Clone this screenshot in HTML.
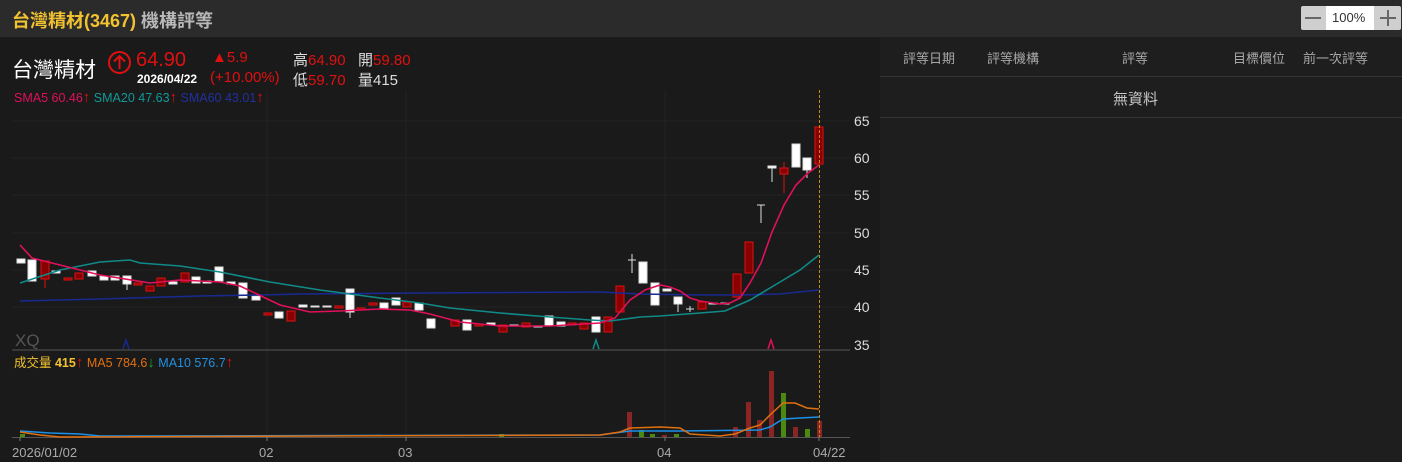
<!DOCTYPE html>
<html><head><meta charset="utf-8"><style>
body{margin:0;width:1402px;height:462px;background:#1a1a1a;overflow:hidden;font-family:"Liberation Sans","Noto Sans CJK TC",sans-serif;position:relative}
.t{position:absolute;white-space:nowrap}
.a{font-size:15px;line-height:10px}
</style></head><body>
<div style="position:absolute;left:0;top:0;width:1402px;height:37px;background:#2b2b2b"></div>
<div class="t" style="left:12px;top:7px;font-size:18px;font-weight:bold;color:#f2c230">台灣精材(3467) <span style="color:#b8b8b8">機構評等</span></div>
<div style="position:absolute;left:1301px;top:6px;width:100px;height:24px;background:#cfcfcf;border-radius:2px"></div>
<div style="position:absolute;left:1326px;top:6px;width:48px;height:24px;background:#fff"></div>
<div class="t" style="left:1332px;top:10px;font-size:13px;color:#333">100%</div>
<div style="position:absolute;left:1305px;top:17px;width:16px;height:2px;background:#666"></div>
<div style="position:absolute;left:1380px;top:17px;width:16px;height:2px;background:#666"></div>
<div style="position:absolute;left:1387px;top:10px;width:2px;height:16px;background:#666"></div>
<div style="position:absolute;left:880px;top:37px;width:522px;height:425px;background:#1e1e1e"></div>
<div style="position:absolute;left:880px;top:76px;width:522px;height:1px;background:#353535"></div>
<div style="position:absolute;left:880px;top:117px;width:522px;height:1px;background:#353535"></div>
<div class="t" style="top:48px;left:903px;font-size:13px;color:#a8a8a8">評等日期</div>
<div class="t" style="top:48px;left:987px;font-size:13px;color:#a8a8a8">評等機構</div>
<div class="t" style="top:48px;left:1122px;font-size:13px;color:#a8a8a8">評等</div>
<div class="t" style="top:48px;left:1233px;font-size:13px;color:#a8a8a8">目標價位</div>
<div class="t" style="top:48px;left:1303px;font-size:13px;color:#a8a8a8">前一次評等</div>
<div class="t" style="top:88px;left:1113px;font-size:15px;color:#c8c8c8">無資料</div>

<div class="t" style="left:12px;top:54px;font-size:21px;color:#fff">台灣精材</div>
<svg style="position:absolute;left:107px;top:50px" width="25" height="25"><circle cx="12.5" cy="12.5" r="10.5" fill="none" stroke="#e01010" stroke-width="2"/><path d="M12.5 19V6M7 11.5l5.5-5.5 5.5 5.5" fill="none" stroke="#e01010" stroke-width="2"/></svg>
<div class="t" style="left:136px;top:49px;font-size:20px;color:#e01010">64.90</div>
<div class="t" style="left:137px;top:72px;font-size:12px;font-weight:bold;color:#fff">2026/04/22</div>
<div class="t" style="left:212px;top:49px;font-size:15px;color:#e01010">▲5.9</div>
<div class="t" style="left:210px;top:69px;font-size:15px;color:#e01010">(+10.00%)</div>
<div class="t" style="left:293px;top:49px;font-size:15px;color:#ddd">高<span style="color:#e01010">64.90</span></div>
<div class="t" style="left:293px;top:69px;font-size:15px;color:#ddd">低<span style="color:#e01010">59.70</span></div>
<div class="t" style="left:358px;top:49px;font-size:15px;color:#ddd">開<span style="color:#e01010">59.80</span></div>
<div class="t" style="left:358px;top:69px;font-size:15px;color:#ddd">量415</div>
<div class="t" style="left:14px;top:91px;font-size:12.5px"><span style="color:#e0105a">SMA5 60.46</span><span class="a" style="color:#e01010">↑</span> <span style="color:#109a98">SMA20 47.63</span><span class="a" style="color:#e01010">↑</span> <span style="color:#2030a0">SMA60 43.01</span><span class="a" style="color:#e01010">↑</span></div>
<div class="t" style="left:14px;top:352px;font-size:12.5px"><span style="color:#f2c230">成交量 <b>415</b></span><span class="a" style="color:#e01010">↑</span> <span style="color:#e07010">MA5 784.6</span><span class="a" style="color:#20a020">↓</span> <span style="color:#2090e0">MA10 576.7</span><span class="a" style="color:#e01010">↑</span></div>
<div class="t" style="left:15px;top:331px;font-size:17px;color:#555">XQ</div>

<svg style="position:absolute;left:0;top:0" width="880" height="462">
<g stroke="#232323" stroke-width="1">
<line x1="12" x2="850" y1="121" y2="121"/><line x1="12" x2="850" y1="158" y2="158"/><line x1="12" x2="850" y1="195" y2="195"/><line x1="12" x2="850" y1="233" y2="233"/><line x1="12" x2="850" y1="270" y2="270"/><line x1="12" x2="850" y1="307" y2="307"/>
<line x1="267" x2="267" y1="90" y2="437"/><line x1="406" x2="406" y1="90" y2="437"/><line x1="665" x2="665" y1="90" y2="437"/>
</g>
<line x1="12" x2="850" y1="350" y2="350" stroke="#555"/>
<line x1="12" x2="850" y1="437.5" y2="437.5" stroke="#555"/>
<g stroke="#777"><line x1="20" x2="20" y1="437" y2="441"/><line x1="267" x2="267" y1="437" y2="441"/><line x1="406" x2="406" y1="437" y2="441"/><line x1="665" x2="665" y1="437" y2="441"/><line x1="819" x2="819" y1="437" y2="441"/></g>
<g font-size="14" fill="#ddd" font-family="Liberation Sans">
<text x="854" y="126">65</text><text x="854" y="163">60</text><text x="854" y="200">55</text><text x="854" y="238">50</text><text x="854" y="275">45</text><text x="854" y="312">40</text><text x="854" y="350">35</text>
</g>
<g font-size="13" fill="#aaa" font-family="Liberation Sans">
<text x="12" y="457">2026/01/02</text><text x="259" y="457">02</text><text x="398" y="457">03</text><text x="657" y="457">04</text><text x="813" y="457">04/22</text>
</g>
<g fill="#fff" stroke="#ddd" stroke-width="1">
<rect x="17" y="259" width="8" height="4"/><rect x="28" y="260" width="8" height="21"/><rect x="52" y="271" width="8" height="2"/>
<rect x="88" y="271" width="8" height="5"/><rect x="100" y="276" width="8" height="4"/><rect x="111" y="276" width="8" height="4"/><rect x="123" y="276" width="8" height="8"/><line x1="127" x2="127" y1="284" y2="290"/>
<rect x="169" y="282" width="8" height="2"/><rect x="192" y="277" width="8" height="6"/><rect x="203" y="281" width="8" height="2"/><rect x="215" y="267" width="8" height="14"/><rect x="227" y="282" width="8" height="2"/>
<rect x="239" y="283" width="8" height="15"/><rect x="252" y="296" width="8" height="4"/><rect x="275" y="312" width="8" height="6"/><rect x="299" y="305" width="8" height="2"/><rect x="311" y="306" width="8" height="1"/><rect x="323" y="306" width="8" height="1"/>
<rect x="346" y="289" width="8" height="23"/><line x1="350" x2="350" y1="312" y2="318"/><rect x="380" y="303" width="8" height="5"/><rect x="392" y="298" width="8" height="7"/><rect x="415" y="303" width="8" height="7"/><rect x="427" y="319" width="8" height="9"/>
<rect x="463" y="320" width="8" height="10"/><rect x="487" y="323" width="8" height="2"/><rect x="510" y="325" width="8" height="1"/><rect x="534" y="326" width="8" height="1"/><rect x="545" y="316" width="8" height="10"/><rect x="557" y="322" width="8" height="4"/>
<rect x="592" y="317" width="8" height="15"/><line x1="632" x2="632" y1="254" y2="273"/><line x1="628" x2="636" y1="260" y2="260"/>
<rect x="639" y="262" width="8" height="21"/><rect x="651" y="283" width="8" height="22"/><rect x="663" y="289" width="8" height="2"/><rect x="674" y="297" width="8" height="7"/><line x1="678" x2="678" y1="304" y2="312"/>
<line x1="686" x2="694" y1="309" y2="309"/><line x1="690" x2="690" y1="306" y2="312"/><rect x="709" y="303" width="8" height="1"/><rect x="721" y="303" width="8" height="1"/>
<line x1="757" x2="765" y1="205" y2="205"/><line x1="761" x2="761" y1="205" y2="223"/>
<rect x="768" y="166" width="8" height="2"/><line x1="772" x2="772" y1="168" y2="182"/>
<rect x="792" y="144" width="8" height="23"/><rect x="803" y="158" width="8" height="12"/><line x1="807" x2="807" y1="170" y2="178"/>
</g>
<g fill="#8a0000" stroke="#e01010" stroke-width="1">
<rect x="41" y="261" width="8" height="18"/><line x1="45" x2="45" y1="279" y2="288"/>
<rect x="64" y="278" width="8" height="2"/><rect x="75" y="273" width="8" height="6"/><rect x="134" y="283" width="8" height="2"/><rect x="146" y="286" width="8" height="5"/>
<rect x="157" y="278" width="8" height="8"/><rect x="181" y="273" width="8" height="9"/><rect x="264" y="313" width="8" height="2"/><rect x="287" y="311" width="8" height="10"/>
<rect x="335" y="306" width="8" height="2"/><rect x="357" y="308" width="8" height="2"/><rect x="369" y="303" width="8" height="2"/><rect x="403" y="302" width="8" height="5"/>
<rect x="451" y="320" width="8" height="6"/><rect x="475" y="324" width="8" height="2"/><rect x="499" y="325" width="8" height="7"/><rect x="522" y="323" width="8" height="4"/><rect x="568" y="323" width="8" height="2"/>
<rect x="580" y="323" width="8" height="6"/><rect x="604" y="317" width="8" height="15"/><rect x="616" y="286" width="8" height="26"/>
<rect x="698" y="302" width="8" height="7"/><rect x="733" y="274" width="8" height="23"/><rect x="745" y="242" width="8" height="31"/>
<rect x="780" y="168" width="8" height="6"/><line x1="784" x2="784" y1="162" y2="168"/><line x1="784" x2="784" y1="174" y2="193"/>
<rect x="815" y="127" width="8" height="37"/>
</g>
<g fill="none" stroke-width="1.6">
<polyline stroke="#182a90" points="20,301 100,299 200,296 260,295 300,294 420,293 600,292 640,294 700,295 740,295 780,294 819,290"/>
<polyline stroke="#108a88" points="20,283 60,270 100,262 130,260 140,263 180,266 220,272 270,282 320,290 380,298 420,303 450,308 500,313 550,317 590,320 610,321 640,317 660,316 700,313 725,311 750,300 775,285 800,270 819,255"/>
<polyline stroke="#e0105a" points="20,245 32,258 60,265 100,275 150,283 180,280 220,282 240,286 280,305 310,312 340,311 380,309 410,310 430,314 460,322 500,326 550,326 600,323 615,318 630,300 645,290 660,285 670,287 680,291 690,298 700,301 720,304 730,303 740,298 750,283 761,263 772,232 784,205 796,185 808,173 819,165"/>
</g>
<g fill="none" stroke-width="1.5"><path d="M123 349l3-9 3 9" stroke="#182a90"/><path d="M593 349l3-9 3 9" stroke="#108a88"/><path d="M768 349l3-9 3 9" stroke="#e0105a"/></g>
<g fill="#8a2525">
<rect x="627" y="412" width="5" height="25"/><rect x="662" y="435" width="5" height="2"/><rect x="733" y="427" width="5" height="10"/><rect x="746" y="402" width="5" height="35"/><rect x="757" y="420" width="5" height="17"/><rect x="769" y="371" width="5" height="66"/><rect x="793" y="427" width="5" height="10"/><rect x="817" y="421" width="5" height="16"/>
</g>
<g fill="#4a8a10">
<rect x="639" y="430" width="5" height="7"/><rect x="650" y="434" width="5" height="3"/><rect x="674" y="434" width="5" height="3"/><rect x="781" y="393" width="5" height="44"/><rect x="805" y="429" width="5" height="8"/><rect x="499" y="434" width="5" height="3"/><rect x="20" y="434" width="5" height="3"/>
</g>
<g fill="none" stroke-width="1.5">
<polyline stroke="#1a90e8" points="20,431 50,433 80,434 100,436 600,435 630,431 680,431 760,430 770,427 783,419 800,418 819,417"/>
<polyline stroke="#e07010" points="20,432 40,435 60,437 600,435 620,432 630,428 660,427 680,428 690,434 720,436 735,434 750,428 760,425 770,415 783,403 795,403 807,408 819,409"/>
</g>
<line x1="819.5" x2="819.5" y1="90" y2="437" stroke="#c88a10" stroke-dasharray="3,2"/>
</svg>
</body></html>
